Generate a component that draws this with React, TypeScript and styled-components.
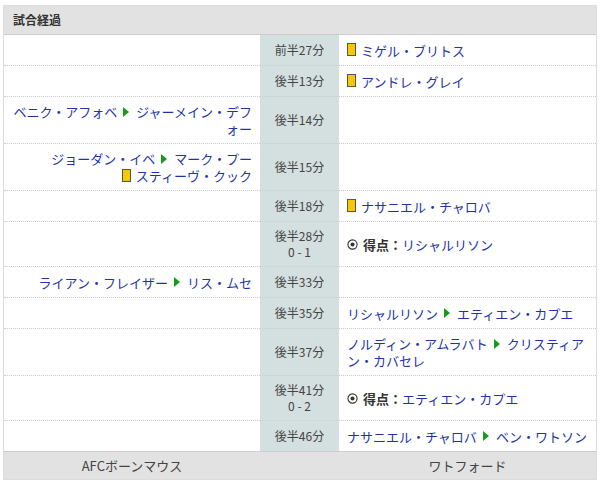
import React from 'react';
import styled, { createGlobalStyle } from 'styled-components';

const Global = createGlobalStyle`
  body { margin: 0; background: #fff; font-family: "Noto Sans CJK JP", "Liberation Sans", sans-serif; font-size: 13px; color: #333; }
`;

const Wrap = styled.div`
  margin: 5px 3px;
  border: 1px solid #ddd;
`;

const Title = styled.div`
  background: #e2e2e2;
  height: 28px;
  line-height: 28px;
  padding-left: 9px;
  font-weight: bold;
  font-size: 12px;
  border-bottom: 1px solid #ccc;
`;

const Table = styled.table`
  width: 100%;
  border-collapse: collapse;
  table-layout: fixed;
  td { padding: 6px 8px; line-height: 17px; height: 18px; border-bottom: 1px dotted #ccc; vertical-align: middle; }
  tr:last-child td { border-bottom: none; }
`;

const Home = styled.td`
  width: 240px;
  text-align: right;
`;

const Time = styled.td`
  width: 71px;
  background: #d4dfdf;
  text-align: center;
  color: #444;
  font-size: 12px;
  && { border-bottom-color: #c4cfcf; padding: 6px 4px; line-height: 16px; }
`;

const Away = styled.td`
  text-align: left;
`;

const Link = styled.span`
  color: #2233aa;
`;

const Card = styled.span`
  display: inline-block;
  width: 7px;
  height: 11px;
  background: #f7c800;
  border: 1px solid #555;
  vertical-align: middle;
  margin: -4px 5px 0 0;
`;

const Arrow = styled.span`
  display: inline-block;
  width: 0;
  height: 0;
  border-left: 6px solid #1a9a1a;
  border-top: 5px solid transparent;
  border-bottom: 5px solid transparent;
  margin: -3px 7px 0 6px;
  vertical-align: middle;
`;

const Goal = styled.b`
  color: #333;
`;

const Ball = () => (
  <svg width="11" height="11" viewBox="0 0 12 12" style={{ verticalAlign: 'middle', margin: '-3px 5px 0 0' }}>
    <circle cx="6" cy="6" r="5" fill="#fff" stroke="#333" strokeWidth="1.2" />
    <circle cx="6" cy="6" r="2.2" fill="#333" />
  </svg>
);

const Footer = styled.div`
  display: flex;
  background: #e2e2e2;
  height: 27px;
  line-height: 27px;
  border-top: 1px solid #ccc;
  color: #444;
`;

const FootCell = styled.div<{ $w?: number }>`
  ${p => (p.$w ? `width:${p.$w}px;` : 'flex:1;')}
  text-align: center;
`;

type Ev = { home?: React.ReactNode; time: React.ReactNode; away?: React.ReactNode };

const sub = (a: string, b: string) => (<><Link>{a}</Link><Arrow /><Link>{b}</Link></>);
const yc = (n: string) => (<><Card /><Link>{n}</Link></>);
const goal = (n: string) => (<><Ball /><Goal>得点：</Goal><Link>{n}</Link></>);

const events: Ev[] = [
  { time: '前半27分', away: yc('ミゲル・ブリトス') },
  { time: '後半13分', away: yc('アンドレ・グレイ') },
  { time: '後半14分', home: sub('ベニク・アフォベ', 'ジャーメイン・デフォー') },
  { time: '後半15分', home: <>{sub('ジョーダン・イベ', 'マーク・プー')}<br />{yc('スティーヴ・クック')}</> },
  { time: '後半18分', away: yc('ナサニエル・チャロバ') },
  { time: <>後半28分<br />0 - 1</>, away: goal('リシャルリソン') },
  { time: '後半33分', home: sub('ライアン・フレイザー', 'リス・ムセ') },
  { time: '後半35分', away: sub('リシャルリソン', 'エティエン・カプエ') },
  { time: '後半37分', away: sub('ノルディン・アムラバト', 'クリスティアン・カバセレ') },
  { time: <>後半41分<br />0 - 2</>, away: goal('エティエン・カプエ') },
  { time: '後半46分', away: sub('ナサニエル・チャロバ', 'ベン・ワトソン') },
];

export default function App() {
  return (
    <>
      <Global />
      <Wrap>
        <Title>試合経過</Title>
        <Table>
          <tbody>
            {events.map((e, i) => (
              <tr key={i}>
                <Home>{e.home}</Home>
                <Time>{e.time}</Time>
                <Away>{e.away}</Away>
              </tr>
            ))}
          </tbody>
        </Table>
        <Footer>
          <FootCell $w={256}>AFCボーンマウス</FootCell>
          <FootCell $w={79} />
          <FootCell>ワトフォード</FootCell>
        </Footer>
      </Wrap>
    </>
  );
}
